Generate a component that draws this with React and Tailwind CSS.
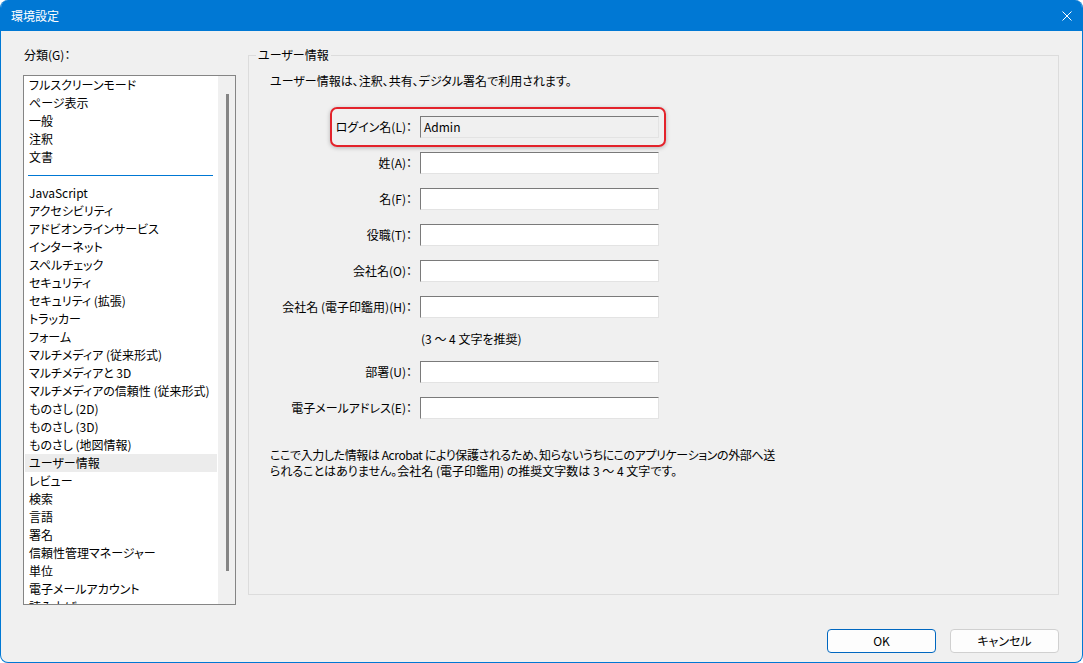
import React from "react";

const topItems = ["フルスクリーンモード", "ページ表示", "一般", "注釈", "文書"];

const moreItems = [
  "JavaScript",
  "アクセシビリティ",
  "アドビオンラインサービス",
  "インターネット",
  "スペルチェック",
  "セキュリティ",
  "セキュリティ (拡張)",
  "トラッカー",
  "フォーム",
  "マルチメディア (従来形式)",
  "マルチメディアと 3D",
  "マルチメディアの信頼性 (従来形式)",
  "ものさし (2D)",
  "ものさし (3D)",
  "ものさし (地図情報)",
  "ユーザー情報",
  "レビュー",
  "検索",
  "言語",
  "署名",
  "信頼性管理マネージャー",
  "単位",
  "電子メールアカウント",
  "読み上げ",
];

function ListItem({ label, selected }) {
  return (
    <div
      className={
        "h-[18px] leading-[18px] pl-[4px] mx-[1px] whitespace-nowrap " +
        (selected ? "bg-[#ececec]" : "")
      }
    >
      {label}
    </div>
  );
}

function Field({ label, value, readOnly, className = "" }) {
  return (
    <div className={"flex items-center " + className}>
      <div className="w-[142px] text-right whitespace-nowrap leading-[16px]">{label}</div>
      <div
        className={
          "ml-[8px] w-[239px] h-[22px] border border-t-[#7a7a7a] border-l-[#7a7a7a] border-r-[#e3e3e3] border-b-[#e3e3e3] pl-[3px] leading-[20px] " +
          (readOnly ? "bg-[#f0f0f0]" : "bg-white")
        }
      >
        {value}
      </div>
    </div>
  );
}

export default function App() {
  return (
    <div className="w-[1083px] h-[663px] bg-white font-['Noto_Sans_CJK_JP',sans-serif] text-[12px] text-black [font-feature-settings:'palt']">
      <div className="w-full h-full flex flex-col rounded-t-[8px] rounded-b-[8px] overflow-hidden border border-t-0 border-[#0078d4] bg-[#f0f0f0]">
        {/* title bar */}
        <div className="h-[31px] shrink-0 bg-[#0078d4] flex items-center justify-between text-white -mx-[1px]">
          <span className="pl-[11px] text-[12px]">環境設定</span>
          <svg width="10" height="10" viewBox="0 0 10 10" className="mr-[11px]">
            <path d="M0.5 0.5 L9.5 9.5 M9.5 0.5 L0.5 9.5" stroke="white" strokeWidth="1" />
          </svg>
        </div>

        <div className="flex-1 flex flex-col">
          <div className="flex pt-[16px] pl-[22px] pr-[23px]">
            {/* left: category list */}
            <div className="w-[213px] shrink-0">
              <div className="h-[16px] leading-[16px] pl-[1px]">分類(G)：</div>
              <div className="mt-[12px] h-[530px] border border-[#858585] bg-white flex overflow-hidden">
                <div className="flex-1 overflow-hidden">
                  {topItems.map((t) => (
                    <ListItem key={t} label={t} />
                  ))}
                  <div className="h-[18px] flex items-center pl-[4px] pr-[5px]">
                    <div className="h-px w-full bg-[#0078d4]" />
                  </div>
                  {moreItems.map((t) => (
                    <ListItem key={t} label={t} selected={t === "ユーザー情報"} />
                  ))}
                </div>
                <div className="w-[17px] shrink-0 bg-[#f0f0f0] pt-[18px] pb-[33px] flex justify-center">
                  <div className="w-[3px] h-full bg-[#858585] ml-[1px]" />
                </div>
              </div>
            </div>

            {/* right: group box */}
            <div className="ml-[12px] flex-1 mt-[8px] h-[540px] border border-[#dcdcdc] relative">
              <span className="absolute -top-[9px] left-[7px] px-[2px] bg-[#f0f0f0] leading-[16px]">
                ユーザー情報
              </span>

              <div className="absolute left-[81px] top-[51px] w-[336px] h-[40px] rounded-[7px] border-2 border-[#e3232b] shadow-[0_1px_4px_rgba(0,0,0,0.25)]" />

              <div className="pt-[17px] pl-[21px]">
                <div className="leading-[16px]">ユーザー情報は、注釈、共有、デジタル署名で利用されます。</div>

                <div className="mt-[27px] flex flex-col gap-[14px]">
                  <Field label="ログイン名(L)：" value="Admin" readOnly />
                  <Field label="姓(A)：" />
                  <Field label="名(F)：" />
                  <Field label="役職(T)：" />
                  <Field label="会社名(O)：" />
                  <Field label="会社名 (電子印鑑用)(H)：" />
                </div>
                <div className="mt-[13px] ml-[151px] leading-[16px]">(3 ～ 4 文字を推奨)</div>
                <div className="mt-[14px] flex flex-col gap-[14px]">
                  <Field label="部署(U)：" />
                  <Field label="電子メールアドレス(E)：" />
                </div>

                <div className="mt-[28px] leading-[16px] whitespace-nowrap">
                  <div className="tracking-[-0.4px]">
                    ここで入力した情報は Acrobat により保護されるため、知らないうちにこのアプリケーションの外部へ送
                  </div>
                  <div>られることはありません。会社名 (電子印鑑用) の推奨文字数は 3 ～ 4 文字です。</div>
                </div>
              </div>
            </div>
          </div>

          {/* buttons */}
          <div className="mt-[24px] flex justify-end gap-[14px] pr-[23px]">
            <button className="w-[109px] h-[24px] rounded-[4px] border border-[#0067c0] bg-[#fdfdfd] text-[12px] leading-[22px]">
              OK
            </button>
            <button className="w-[109px] h-[24px] rounded-[4px] border border-[#d0d0d0] bg-[#fdfdfd] text-[12px] leading-[22px]">
              キャンセル
            </button>
          </div>
        </div>
      </div>
    </div>
  );
}
